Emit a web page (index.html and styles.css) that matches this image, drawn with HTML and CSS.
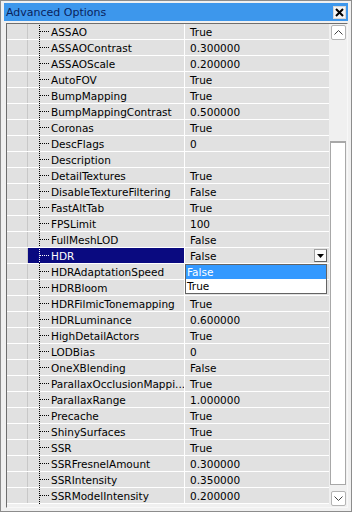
FILE: index.html
```html
<!DOCTYPE html>
<html>
<head>
<meta charset="utf-8">
<link rel="stylesheet" href="styles.css">
</head>
<body>
<div class="window">
  <div class="titlebar">
    <span class="title">Advanced Options</span>
    <span class="close"><svg width="9" height="9" viewBox="0 0 9 9"><path d="M1 1L8 8M8 1L1 8" stroke="#000" stroke-width="2"/></svg></span>
  </div>
  <div class="list">
    <div class="rows">
      <div class="row"><div class="gutter"></div><div class="tree"></div><div class="name">ASSAO</div><div class="value">True</div></div>
      <div class="row"><div class="gutter"></div><div class="tree"></div><div class="name">ASSAOContrast</div><div class="value">0.300000</div></div>
      <div class="row"><div class="gutter"></div><div class="tree"></div><div class="name">ASSAOScale</div><div class="value">0.200000</div></div>
      <div class="row"><div class="gutter"></div><div class="tree"></div><div class="name">AutoFOV</div><div class="value">True</div></div>
      <div class="row"><div class="gutter"></div><div class="tree"></div><div class="name">BumpMapping</div><div class="value">True</div></div>
      <div class="row"><div class="gutter"></div><div class="tree"></div><div class="name">BumpMappingContrast</div><div class="value">0.500000</div></div>
      <div class="row"><div class="gutter"></div><div class="tree"></div><div class="name">Coronas</div><div class="value">True</div></div>
      <div class="row"><div class="gutter"></div><div class="tree"></div><div class="name">DescFlags</div><div class="value">0</div></div>
      <div class="row"><div class="gutter"></div><div class="tree"></div><div class="name">Description</div><div class="value"></div></div>
      <div class="row"><div class="gutter"></div><div class="tree"></div><div class="name">DetailTextures</div><div class="value">True</div></div>
      <div class="row"><div class="gutter"></div><div class="tree"></div><div class="name">DisableTextureFiltering</div><div class="value">False</div></div>
      <div class="row"><div class="gutter"></div><div class="tree"></div><div class="name">FastAltTab</div><div class="value">True</div></div>
      <div class="row"><div class="gutter"></div><div class="tree"></div><div class="name">FPSLimit</div><div class="value">100</div></div>
      <div class="row"><div class="gutter"></div><div class="tree"></div><div class="name">FullMeshLOD</div><div class="value">False</div></div>
      <div class="row selected"><div class="gutter"></div><div class="tree"></div><div class="name">HDR</div><div class="value combo"><span>False</span><span class="drop"><svg width="7" height="4" viewBox="0 0 7 4"><path d="M0 0H7L3.5 4Z" fill="#000"/></svg></span>
        <div class="popup"><div class="opt hot">False</div><div class="opt">True</div></div>
      </div></div>
      <div class="row"><div class="gutter"></div><div class="tree"></div><div class="name">HDRAdaptationSpeed</div><div class="value"></div></div>
      <div class="row"><div class="gutter"></div><div class="tree"></div><div class="name">HDRBloom</div><div class="value"></div></div>
      <div class="row"><div class="gutter"></div><div class="tree"></div><div class="name">HDRFilmicTonemapping</div><div class="value">True</div></div>
      <div class="row"><div class="gutter"></div><div class="tree"></div><div class="name">HDRLuminance</div><div class="value">0.600000</div></div>
      <div class="row"><div class="gutter"></div><div class="tree"></div><div class="name">HighDetailActors</div><div class="value">True</div></div>
      <div class="row"><div class="gutter"></div><div class="tree"></div><div class="name">LODBias</div><div class="value">0</div></div>
      <div class="row"><div class="gutter"></div><div class="tree"></div><div class="name">OneXBlending</div><div class="value">False</div></div>
      <div class="row"><div class="gutter"></div><div class="tree"></div><div class="name">ParallaxOcclusionMappi...</div><div class="value">True</div></div>
      <div class="row"><div class="gutter"></div><div class="tree"></div><div class="name">ParallaxRange</div><div class="value">1.000000</div></div>
      <div class="row"><div class="gutter"></div><div class="tree"></div><div class="name">Precache</div><div class="value">True</div></div>
      <div class="row"><div class="gutter"></div><div class="tree"></div><div class="name">ShinySurfaces</div><div class="value">True</div></div>
      <div class="row"><div class="gutter"></div><div class="tree"></div><div class="name">SSR</div><div class="value">True</div></div>
      <div class="row"><div class="gutter"></div><div class="tree"></div><div class="name">SSRFresnelAmount</div><div class="value">0.300000</div></div>
      <div class="row"><div class="gutter"></div><div class="tree"></div><div class="name">SSRIntensity</div><div class="value">0.350000</div></div>
      <div class="row"><div class="gutter"></div><div class="tree"></div><div class="name">SSRModelIntensity</div><div class="value">0.200000</div></div>
    </div>
    <div class="scrollbar">
      <div class="sbtn"><svg width="9" height="5" viewBox="0 0 9 5"><path d="M0.5 4.5L4.5 0.5L8.5 4.5" fill="none" stroke="#444" stroke-width="1"/></svg></div>
      <div class="track">
        <div class="thumb"></div>
      </div>
      <div class="sbtn"><svg width="9" height="5" viewBox="0 0 9 5"><path d="M0.5 0.5L4.5 4.5L8.5 0.5" fill="none" stroke="#444" stroke-width="1"/></svg></div>
    </div>
  </div>
</div>
</body>
</html>
```

FILE: styles.css
```css
html, body {
  margin: 0;
  padding: 0;
}
body {
  width: 352px;
  height: 512px;
  font-family: "DejaVu Sans", Tahoma, sans-serif;
  font-size: 10.5px;
  color: #000;
}
.window {
  box-sizing: border-box;
  width: 352px;
  height: 512px;
  background: #f0f0f0;
  border: 1px solid #8c8c8c;
  padding: 2px 3px 3px 5px;
  display: flex;
  flex-direction: column;
}
.titlebar {
  height: 18px;
  margin-left: -2px;
  background: #3d97ec;
  display: flex;
  align-items: center;
  justify-content: space-between;
  padding: 0 2px 0 2px;
}
.title {
  color: #0a1f5c;
  font-size: 11px;
}
.close {
  width: 13px;
  height: 13px;
  background: #f4f4f4;
  border: 1px solid #d8d8d8;
  display: flex;
  align-items: center;
  justify-content: center;
  box-sizing: border-box;
}
.list {
  margin-top: 2px;
  flex: 1;
  display: flex;
  border: 1px solid #6e6e6e;
  border-right-color: #f8f8f8;
  border-bottom-color: #f8f8f8;
  overflow: hidden;
}
.rows {
  flex: 1;
  display: flex;
  flex-direction: column;
}
.row {
  height: 16px;
  box-sizing: border-box;
  display: flex;
  border-bottom: 1px solid #fff;
  background: #e1e1e1;
}
.gutter {
  width: 20px;
  border-right: 1px solid #c8c8c8;
}
.tree {
  width: 22px;
  position: relative;
  background: #e1e1e1;
}
.tree::before {
  content: "";
  position: absolute;
  left: 11px;
  top: -1px;
  bottom: -1px;
  border-left: 1px dotted #000;
}
.tree::after {
  content: "";
  position: absolute;
  left: 12px;
  width: 9px;
  top: 7px;
  border-top: 1px dotted #000;
}
.name {
  width: 133px;
  padding-left: 1px;
  line-height: 16px;
  white-space: nowrap;
  overflow: hidden;
  border-right: 1px solid #fff;
}
.value {
  flex: 1;
  padding-left: 5px;
  line-height: 16px;
  white-space: nowrap;
}
.selected .name {
  background: #0a0a80;
  color: #fff;
}
.selected .tree {
  background: #0a0a80;
}
.selected .tree::before,
.selected .tree::after {
  border-color: #fff;
}
.combo {
  position: relative;
  display: flex;
  justify-content: space-between;
  align-items: center;
  padding-right: 2px;
}
.drop {
  width: 13px;
  height: 13px;
  box-sizing: border-box;
  background: #fafafa;
  border: 1px solid #a0a0a0;
  border-right-color: #606060;
  border-bottom-color: #606060;
  display: flex;
  align-items: center;
  justify-content: center;
}
.popup {
  position: absolute;
  left: 0;
  top: 16px;
  width: 142px;
  height: 30px;
  box-sizing: border-box;
  background: #fff;
  border: 1px solid #646464;
  z-index: 2;
}
.opt {
  height: 14px;
  line-height: 14px;
  padding-left: 1px;
}
.opt.hot {
  background: #3399ff;
  color: #fff;
}
.scrollbar {
  width: 18px;
  display: flex;
  flex-direction: column;
  align-items: center;
  background: #f0f0f0;
  padding: 1px 0;
}
.sbtn {
  width: 15px;
  height: 15px;
  box-sizing: border-box;
  border: 1px solid #b4b4b4;
  border-radius: 2px;
  background: #fff;
  display: flex;
  align-items: center;
  justify-content: center;
}
.track {
  flex: 1;
  width: 100%;
  display: flex;
  flex-direction: column;
  padding-top: 101px;
  padding-bottom: 6px;
  box-sizing: border-box;
}
.thumb {
  flex: 1;
  margin: 0 1px;
  background: #fff;
  border: 1px solid #a8a8a8;
  border-top: 2px solid #a8a8a8;
}
```
